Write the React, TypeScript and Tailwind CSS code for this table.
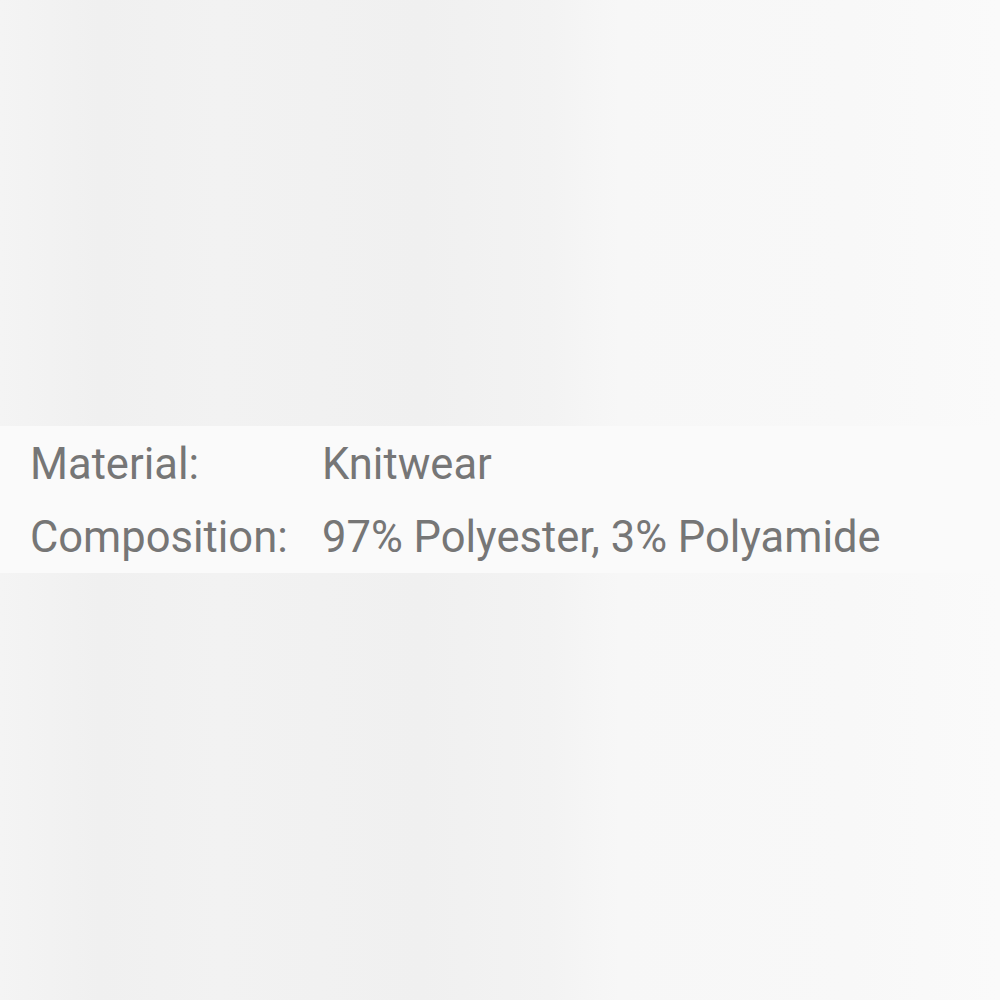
export default function App() {
  return (
    <div className="w-[1000px] h-[1000px] flex flex-col bg-[linear-gradient(to_right,#f4f4f4_0%,#f0f0f0_10%,#f2f2f2_22%,#f0f0f0_42%,#f3f3f3_55%,#f7f7f7_62%,#f8f8f8_85%,#fafafa_100%)]" style={{ fontFamily: "Roboto, sans-serif" }}>
      <div className="h-[426px]" />
      <div className="h-[147px] bg-[#fafafa] flex flex-col justify-center pl-[30px] pt-[3px] text-[43.5px] text-[#767676] leading-[73px]">
        <div className="flex">
          <span className="w-[292px]">Material:</span>
          <span>Knitwear</span>
        </div>
        <div className="flex">
          <span className="w-[292px]">Composition:</span>
          <span>97% Polyester, 3% Polyamide</span>
        </div>
      </div>
      <div className="flex-1" />
    </div>
  );
}
